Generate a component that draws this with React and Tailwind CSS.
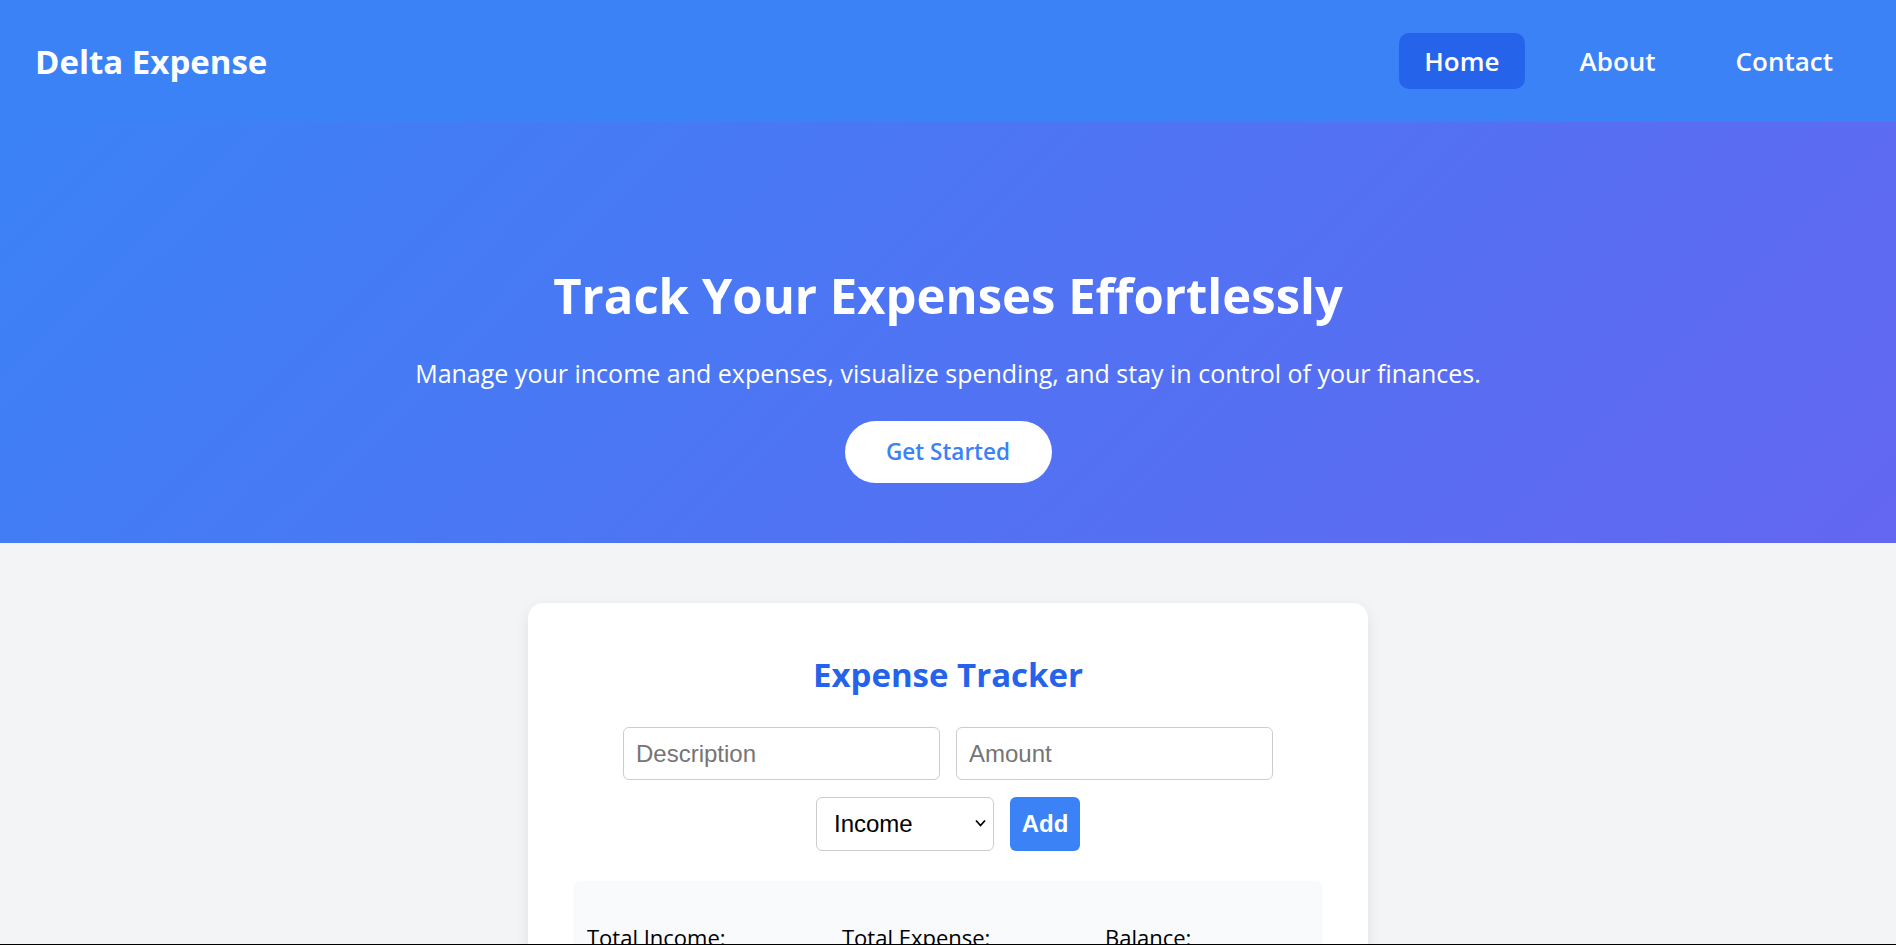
import React from "react";

export default function App() {
  return (
    <div className="min-h-screen bg-[#f3f4f6] font-['Open_Sans',sans-serif] text-black">
      {/* Navbar */}
      <header className="flex h-[122px] items-center justify-between bg-[#3b82f6] pl-[35px] pr-[38px]">
        <div className="text-[33px] font-bold leading-none text-white">Delta Expense</div>
        <nav className="flex items-center gap-[30px]">
          <a className="rounded-[10px] bg-[#2563eb] px-[25px] py-[10px] text-[26px] font-semibold leading-[36px] text-white">
            Home
          </a>
          <a className="rounded-[10px] px-[25px] py-[10px] text-[26px] font-semibold leading-[36px] text-white">
            About
          </a>
          <a className="rounded-[10px] px-[25px] py-[10px] text-[26px] font-semibold leading-[36px] text-white">
            Contact
          </a>
        </nav>
      </header>

      {/* Hero */}
      <section className="flex h-[421px] flex-col items-center bg-[linear-gradient(135deg,#3b82f6,#6366f1)] pt-[148px] text-center text-white">
        <h1 className="text-[49px] font-bold leading-[50px]">Track Your Expenses Effortlessly</h1>
        <p className="mt-[41px] text-[25px] leading-[24px]">
          Manage your income and expenses, visualize spending, and stay in control of your finances.
        </p>
        <button className="mt-[36px] flex h-[62px] w-[207px] items-center justify-center rounded-full bg-white text-[22.5px] font-semibold text-[#3b82f6]">
          Get Started
        </button>
      </section>

      {/* Tracker card */}
      <main className="flex justify-center pt-[60px] pb-[60px]">
        <div className="w-[840px] rounded-[15px] bg-white pt-[54px] pb-[40px] shadow-[0_4px_14px_rgba(0,0,0,0.08)]">
          <h2 className="text-center text-[33px] font-bold leading-[36px] text-[#2563eb]">Expense Tracker</h2>

          <div className="mt-[34px] flex flex-wrap justify-center gap-x-[16px] gap-y-[17px] px-[40px] font-['Liberation_Sans',Arial,sans-serif]">
            <input
              type="text"
              placeholder="Description"
              className="h-[53px] w-[317px] rounded-[6px] border border-[#cccccc] bg-white px-[12px] text-[24px] text-black placeholder:text-[#757575] focus:outline-none"
            />
            <input
              type="number"
              placeholder="Amount"
              className="h-[53px] w-[317px] rounded-[6px] border border-[#cccccc] bg-white px-[12px] text-[24px] text-black placeholder:text-[#757575] focus:outline-none"
            />
            <div className="flex w-full justify-center gap-[16px]">
              <div className="relative h-[54px] w-[178px]">
                <select className="h-full w-full appearance-none rounded-[6px] border border-[#cccccc] bg-white pr-[30px] pl-[17px] text-[24px] text-black">
                  <option>Income</option>
                  <option>Expense</option>
                </select>
                <svg
                  className="pointer-events-none absolute top-[22px] right-[8px]"
                  width="11"
                  height="8"
                  viewBox="0 0 11 8"
                  fill="none"
                >
                  <path d="M1 1.5 L5.5 6.5 L10 1.5" stroke="#000" strokeWidth="1.8" />
                </svg>
              </div>
              <button className="h-[54px] w-[70px] rounded-[6px] bg-[#3b82f6] text-[24px] font-bold text-white">
                Add
              </button>
            </div>
          </div>

          <div className="mx-[45px] mt-[30px] rounded-[8px] bg-[#f9fafb] px-[14px] pt-[45px] pb-[30px]">
            <div className="grid grid-cols-[255px_263px_1fr] text-[22px] leading-[22px]">
              <div>
                <div>Total Income:</div>
                <div className="mt-[8px] font-semibold text-[#16a34a]">$0.00</div>
              </div>
              <div>
                <div>Total Expense:</div>
                <div className="mt-[8px] font-semibold text-[#dc2626]">$0.00</div>
              </div>
              <div>
                <div>Balance:</div>
                <div className="mt-[8px] font-semibold text-[#2563eb]">$0.00</div>
              </div>
            </div>
          </div>
        </div>
      </main>

      <div className="fixed bottom-0 left-0 h-px w-full bg-black" />
    </div>
  );
}
